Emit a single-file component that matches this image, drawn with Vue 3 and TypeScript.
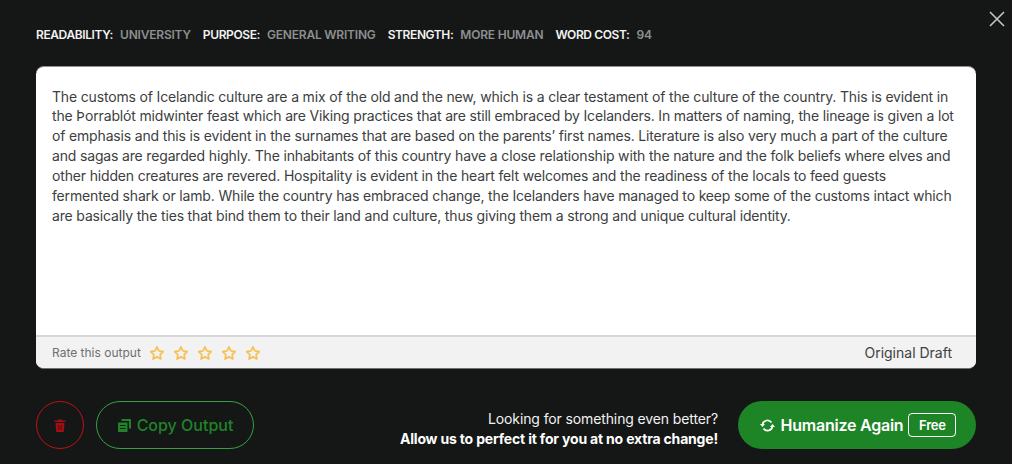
<script setup lang="ts">
const meta = [
  { label: 'READABILITY:', value: 'UNIVERSITY' },
  { label: 'PURPOSE:', value: 'GENERAL WRITING' },
  { label: 'STRENGTH:', value: 'MORE HUMAN' },
  { label: 'WORD COST:', value: '94' },
]
const lines = [
  'The customs of Icelandic culture are a mix of the old and the new, which is a clear testament of the culture of the country. This is evident in',
  'the Þorrablót midwinter feast which are Viking practices that are still embraced by Icelanders. In matters of naming, the lineage is given a lot',
  'of emphasis and this is evident in the surnames that are based on the parents’ first names. Literature is also very much a part of the culture',
  'and sagas are regarded highly. The inhabitants of this country have a close relationship with the nature and the folk beliefs where elves and',
  'other hidden creatures are revered. Hospitality is evident in the heart felt welcomes and the readiness of the locals to feed guests',
  'fermented shark or lamb. While the country has embraced change, the Icelanders have managed to keep some of the customs intact which',
  'are basically the ties that bind them to their land and culture, thus giving them a strong and unique cultural identity.',
]
const stars = [1, 2, 3, 4, 5]
</script>

<template>
  <main class="page">
    <button class="close" aria-label="Close">
      <svg width="16" height="16" viewBox="0 0 16 16"><path d="M1 1l14 14M15 1L1 15" stroke="#c4c6c4" stroke-width="1.6" fill="none" /></svg>
    </button>
    <header class="meta">
      <div v-for="m in meta" :key="m.label" class="meta-item">
        <span class="meta-label">{{ m.label }}</span>
        <span class="meta-value">{{ m.value }}</span>
      </div>
    </header>
    <section class="card">
      <div class="output">
        <p v-for="l in lines" :key="l" class="line">{{ l }}</p>
      </div>
      <div class="card-foot">
        <div class="rate">
          <span class="rate-label">Rate this output</span>
          <svg v-for="s in stars" :key="s" class="star" width="16" height="16" viewBox="0 0 24 24">
            <path d="M12 2.800l2.900 6.100 6.600.9-4.800 4.600 1.200 6.600-5.900-3.200-5.900 3.200 1.200-6.600L2.500 9.800l6.600-.9z" fill="none" stroke="#f5c255" stroke-width="2.600" stroke-linejoin="round" />
          </svg>
        </div>
        <span class="draft">Original Draft</span>
      </div>
    </section>
    <footer class="actions">
      <button class="trash" aria-label="Delete">
        <svg width="12" height="13" viewBox="0 0 12 13">
          <path d="M4 0.500h4l.5 1H11.500v1.500H.5V1.500h3zM1.500 4h9l-.7 9H2.200z" fill="#a00d13" />
          <path d="M4.500 6v5M6 6v5M7.500 6v5" stroke="#3a1012" stroke-width=".6" />
        </svg>
      </button>
      <button class="copy">
        <svg width="13" height="13" viewBox="0 0 13 13">
          <path d="M3.500 0H13v9.500h-2V2H3.500z" fill="#1f8427" />
          <path d="M0 3.500h9.500V13H0zM2 6v1h5.500V6zM2 9v1h5.500V9z" fill="#1f8427" fill-rule="evenodd" />
        </svg>
        Copy Output
      </button>
      <div class="pitch">
        <div>Looking for something even better?</div>
        <strong>Allow us to perfect it for you at no extra change!</strong>
      </div>
      <button class="again">
        <svg width="15" height="13" viewBox="0 0 15 13" fill="none" stroke="#fff" stroke-width="1.700">
          <path d="M2.500 5.500A5 5 0 0 1 11.500 3.500M12.500 7.500A5 5 0 0 1 3.500 9.500" />
          <path d="M0 5h5L2.500 8zM15 8h-5l2.500-3z" fill="#fff" stroke="none" />
        </svg>
        <span class="again-label">Humanize Again</span>
        <span class="free">Free</span>
      </button>
    </footer>
  </main>
</template>

<style>
html, body { margin: 0; background: #151717; }
</style>

<style scoped>
.page {
  position: relative;
  box-sizing: border-box;
  width: 1012px;
  height: 464px;
  padding: 27px 36px 0;
  background: #151717;
  font-family: Inter, "Liberation Sans", sans-serif;
  overflow: hidden;
}
button { font-family: inherit; cursor: pointer; padding: 0; }
.close {
  position: absolute;
  top: 11px;
  right: 7px;
  width: 16px;
  height: 16px;
  border: 0;
  background: none;
  display: flex;
}
.meta { display: flex; gap: 12px; height: 15px; align-items: center; font-size: 12px; font-weight: 600; }
.meta-item { display: flex; gap: 7px; }
.meta-label { color: #f2f2f2; letter-spacing: -0.4px; }
.meta-value { color: #8d8f8f; letter-spacing: -0.2px; }
.card {
  box-sizing: border-box;
  margin-top: 24px;
  height: 303px;
  display: flex;
  flex-direction: column;
  border-radius: 8px;
  background: #fff;
  border-top: 1px solid #8f8f8f;
  border-bottom: 1px solid #6f6f6f;
  overflow: hidden;
}
.output { flex: 1; padding: 19.500px 16px 0; }
.line { margin: 0; font-size: 14px; line-height: 19.900px; color: #3c3e40; white-space: nowrap; letter-spacing: -0.165px; }
.card-foot {
  box-sizing: border-box;
  height: 33px;
  border-top: 2px solid #d6d6d6;
  background: #f2f2f2;
  display: flex;
  align-items: center;
  justify-content: space-between;
  padding: 0 24px 0 16px;
}
.rate { display: flex; align-items: center; gap: 8px; }
.rate-label { font-size: 12px; color: #6d6f70; }
.draft { font-size: 14px; color: #3f4143; }
.actions { margin-top: 32px; display: flex; align-items: center; }
.trash {
  width: 48px;
  height: 48px;
  border-radius: 50%;
  border: 1px solid #c00f18;
  background: none;
  display: flex;
  align-items: center;
  justify-content: center;
}
.copy {
  margin-left: 12px;
  width: 158px;
  height: 48px;
  border-radius: 24px;
  border: 1px solid #35a043;
  background: none;
  color: #1f8427;
  font-size: 16px;
  font-weight: 500;
  display: flex;
  align-items: center;
  justify-content: center;
  gap: 6px;
  padding-left: 1px;
}
.pitch { margin-left: auto; margin-top: 8px; text-align: right; color: #f2f2f2; font-size: 14px; line-height: 20px; letter-spacing: -0.12px; }
.pitch strong { font-weight: 700; color: #fff; letter-spacing: -0.18px; }
.again {
  margin-left: 20px;
  width: 238px;
  height: 48px;
  border-radius: 24px;
  border: 0;
  background: #1e8527;
  color: #fff;
  font-size: 16px;
  font-weight: 600;
  letter-spacing: -0.24px;
  display: flex;
  align-items: center;
  justify-content: center;
  gap: 5px;
  padding-left: 2px;
}
.again-label { margin-left: 1px; }
.free {
  box-sizing: border-box;
  height: 24px;
  width: 48px;
  border: 1px solid #fff;
  border-radius: 4px;
  font-size: 13px;
  display: flex;
  align-items: center;
  justify-content: center;
}
</style>
